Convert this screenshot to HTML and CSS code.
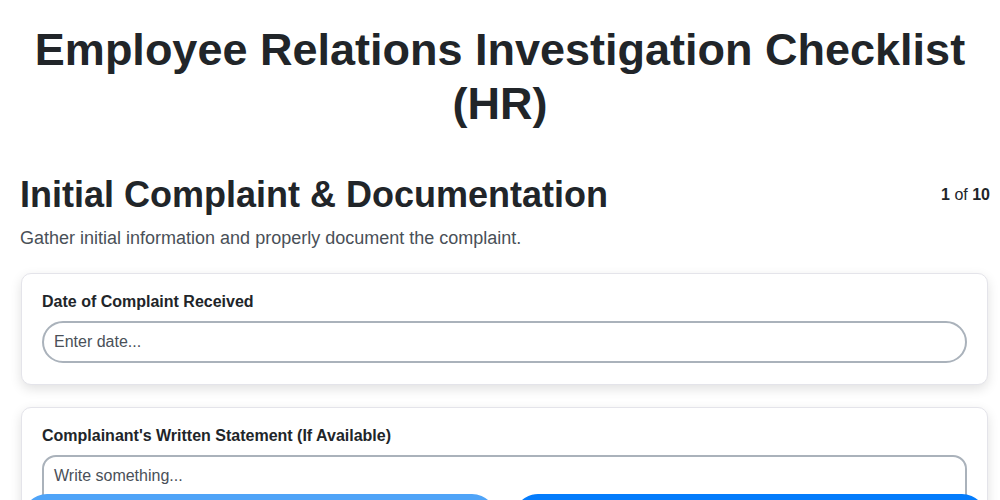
FILE: index.html
```html
<html>
  <head>
    <title>Employee Relations Investigation Checklist</title>
    <link rel="stylesheet" href="styles.css">
  </head>
  <body>
    <div id="page">
      <h1 class="doc-title">Employee Relations Investigation Checklist (HR)</h1>

      <div class="step-head">
        <h2>Initial Complaint &amp; Documentation</h2>
        <div class="counter"><b>1</b> of <b>10</b></div>
      </div>
      <p class="step-desc">Gather initial information and properly document the complaint.</p>

      <div class="card">
        <label>Date of Complaint Received</label>
        <input type="text" placeholder="Enter date...">
      </div>

      <div class="card">
        <label>Complainant's Written Statement (If Available)</label>
        <textarea rows="4" placeholder="Write something..."></textarea>
      </div>
    </div>

    <div class="nav">
      <button class="btn prev" aria-label="Previous"></button>
      <button class="btn next" aria-label="Next"></button>
    </div>
  </body>
</html>
```

FILE: styles.css
```css
body {
  margin: 0;
  background-color: #fff;
  font-family: "Liberation Sans", Arial, sans-serif;
  color: #212529;
}

#page {padding: 0 12px 0 20px;}

.doc-title {
  font-size: 45px;
  line-height: 54px;
  text-align: center;
  margin: 23px 8px 42px 0;
}

.step-head {
  display: flex;
  justify-content: space-between;
  align-items: flex-start;
}
.step-head h2 {font-size: 36px; line-height: 44px; margin: 0;}
.counter {font-size: 16px; margin: 13px -2px 0 0;}

.step-desc {
  font-size: 18px;
  color: #495057;
  margin: 11px 0 24px 0;
}

.card {
  background: #fff;
  border: 1px solid #e4e4ea;
  border-radius: 10px;
  box-shadow: 0 4px 12px rgba(0, 0, 0, 0.12);
  padding: 19px 20px 21px 20px;
  margin: 0 0 22px 1px;
}
.card label {
  display: block;
  font-size: 16px;
  font-weight: bold;
  margin-bottom: 10px;
}
.card input, .card textarea {
  display: block;
  width: 100%;
  box-sizing: border-box;
  font-family: "Liberation Sans", Arial, sans-serif;
  font-size: 16px;
  color: #212529;
  border: 2px solid #aab2bb;
  padding: 8px 10px;
  outline: none;
}
.card input {height: 42px; border-radius: 21px;}
.card textarea {border-radius: 14px; resize: none; padding-top: 10px;}
.card input::placeholder, .card textarea::placeholder {color: #4a5058;}

.nav {
  position: fixed;
  left: 22px;
  right: 13px;
  bottom: -44px;
  display: flex;
  gap: 16px;
}
.btn {
  flex: 1;
  height: 50px;
  border: none;
  border-radius: 25px;
}
.prev {background: #4fa4f8;}
.next {background: #047cfc;}
```
